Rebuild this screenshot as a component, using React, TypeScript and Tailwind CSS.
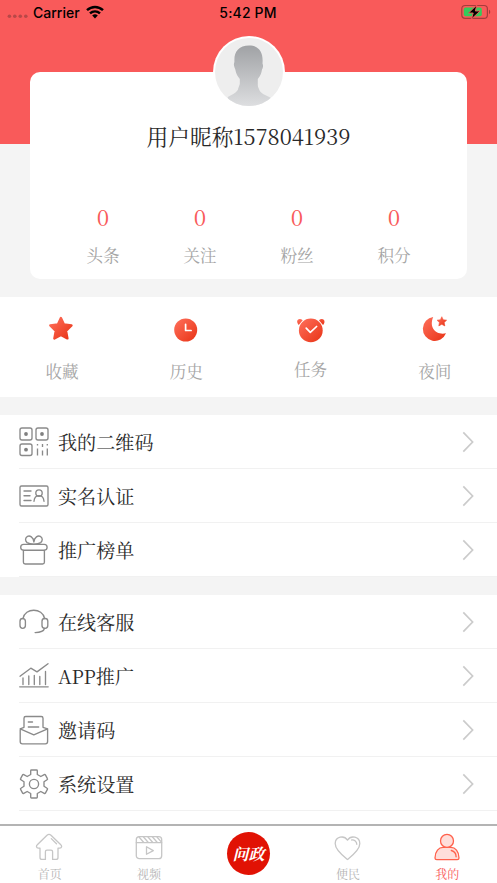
import type { ReactNode } from 'react';

const serif =
  "font-['Noto_Serif_CJK_SC','Source_Han_Serif_SC','Noto_Serif_SC','Liberation_Serif','Noto_Sans_CJK_SC',serif]";

function StatusBar() {
  return (
    <div className="grid h-6 grid-cols-3 items-center pl-[7px] pr-[6px] font-['Inter','Liberation_Sans',sans-serif] text-[14px] font-medium text-black">
      <div className="flex items-center">
        <svg width="22" height="24" viewBox="0 0 22 24" fill="#b84848">
          <circle cx="2.4" cy="16.3" r="1.8" />
          <circle cx="7.8" cy="16.3" r="1.8" />
          <circle cx="13.3" cy="16.3" r="1.8" />
          <circle cx="18.8" cy="16.3" r="1.8" />
        </svg>
        <span className="ml-[4px] w-[48px] whitespace-nowrap">Carrier</span>
        <svg className="ml-[5px]" width="18" height="14" viewBox="0 0 18 14" fill="none" stroke="#000" strokeWidth="2.5">
          <path d="M1 5.2C5.7.9 12.3.9 17 5.2" />
          <path d="M4 8.4c2.9-2.6 7.1-2.6 10 0" />
          <path d="M6.2 10.5a4 4 0 0 1 5.6 0L9 13.4z" fill="#000" stroke="none" />
        </svg>
      </div>
      <span className="-ml-[2px] text-center tracking-[0.15px]">5:42 PM</span>
      <svg className="justify-self-end" width="30" height="16" viewBox="0 0 30 16">
        <rect x="0.8" y="1.5" width="25.6" height="12.8" rx="3.4" fill="none" stroke="#a63c3c" strokeWidth="1.2" />
        <path d="M28 5.7c1.6.5 1.6 3.9 0 4.4z" fill="#a63c3c" />
        <rect x="2.8" y="3.6" width="18" height="8.6" rx="1.8" fill="#35cb5b" />
        <path d="M15.9.9 7.6 9h4.6l-1.7 6 8.5-8h-4.7z" fill="#000" stroke="#f95a5a" strokeWidth="0.9" />
      </svg>
    </div>
  );
}

function Avatar() {
  return (
    <svg className="-mt-9 shrink-0" width="72" height="72" viewBox="0 0 72 72">
      <defs>
        <linearGradient id="person" x1="0" y1="0" x2="0" y2="1">
          <stop offset="0" stopColor="#a0a2a5" />
          <stop offset="1" stopColor="#e0e1e3" />
        </linearGradient>
        <clipPath id="portrait">
          <circle cx="36" cy="36" r="34" />
        </clipPath>
      </defs>
      <circle cx="36" cy="36" r="36" fill="#fff" />
      <circle cx="36" cy="36" r="34" fill="#eee" />
      <path
        clipPath="url(#portrait)"
        fill="url(#person)"
        d="M36 9.500c-10 0-15 6-14.600 15.500.1 2-.8 2.500-.4 4.500.4 2 .8 2.700 1.300 4 .7 4.500 2.400 6.700 4.500 9.500v5c-.8 2.700-1.500 3.800-2 6-2.200 3.500-6.400 4.700-10 7V73h43V62c-4-2.500-9-3.800-11-7-.7-2.200-2-3.500-2-6v-6c3-3.500 3.600-6 4.200-9.500 1.100-1.600 1.400-4.300.5-6C50.500 16 46 9.500 36 9.500z"
      />
    </svg>
  );
}

const stats = ['头条', '关注', '粉丝', '积分'];

function Profile() {
  return (
    <header className="h-[297px] shrink-0 bg-[linear-gradient(#f95a5a_144px,#f4f4f4_144px)]">
      <StatusBar />
      <section className="mx-[30px] mt-12 flex h-[207px] flex-col items-center rounded-[10px] bg-white">
        <Avatar />
        <h1 className="mt-[13px] flex h-[30px] items-center text-[21.7px] leading-[30px] whitespace-nowrap text-[#292929]">
          用户昵称1578041939
        </h1>
        <dl className="mt-[51px] grid w-[388px] grid-cols-4 text-center">
          {stats.map((label) => (
            <div key={label} className="flex flex-col-reverse">
              <dt className="mt-[13px] text-[16.6px] leading-[24px] text-[#a5a5a5]">{label}</dt>
              <dd className="text-[22.5px] leading-[28px] text-[#f95a5a]">0</dd>
            </div>
          ))}
        </dl>
      </section>
    </header>
  );
}

function Quick({ label, raised, children }: { label: string; raised?: boolean; children: ReactNode }) {
  return (
    <button className="flex flex-col items-center pt-[16px]">
      <svg width="32" height="32" viewBox="0 0 32 32" fill="url(#ember)">
        {children}
      </svg>
      <span className={`${raised ? 'mt-[12px]' : 'mt-[14px]'} text-[16.6px] leading-[24px] text-[#a5a5a5]`}>{label}</span>
    </button>
  );
}

function QuickActions() {
  return (
    <section className="grid h-[100px] shrink-0 grid-cols-4 bg-white">
      <svg className="absolute" width="0" height="0">
        <defs>
          <linearGradient id="ember" x1="0" y1="0" x2="1" y2="1">
            <stop offset="0" stopColor="#ff705c" />
            <stop offset="1" stopColor="#e83315" />
          </linearGradient>
        </defs>
      </svg>
      <Quick label="收藏">
        <path
          d="M14.900 5 17.900 11.400l7.600 1-5.500 5.400 1.400 7.600-6.500-3.400-6.500 3.400 1.400-7.600-5.500-5.400 7.600-1z"
          stroke="url(#ember)"
          strokeWidth="2.4"
          strokeLinejoin="round"
        />
      </Quick>
      <Quick label="历史">
        <circle cx="15.700" cy="17" r="11.500" />
        <path d="M15.600 11.300v6.200h5.500" fill="none" stroke="#fff" strokeWidth="1.7" strokeLinecap="round" strokeLinejoin="round" />
      </Quick>
      <Quick label="任务" raised>
        <circle cx="15.800" cy="17.400" r="11.900" />
        <path d="M3.700 12C-.2 7.500 4 4.200 7.700 7.300M28 12C31.800 7.500 27.600 4.200 23.900 7.300" />
        <path d="m11.200 15.200 4.100 4.200 6.300-5.900" fill="none" stroke="#fff" strokeWidth="1.7" strokeLinecap="round" strokeLinejoin="round" />
      </Quick>
      <Quick label="夜间">
        <path d="M14.200 4A12 12 0 1 0 27 20.300C17.500 22.500 9.500 15 14.200 4z" />
        <path d="m22.800 3.700 1.400 3 3.400.5-2.400 2.300.6 3.400-3-1.600-3 1.600.6-3.400L18 7.200l3.400-.5z" stroke="url(#ember)" strokeWidth="0.600" strokeLinejoin="round" />
      </Quick>
    </section>
  );
}

const glyphs: Record<string, ReactNode> = {
  qr: (
    <>
      <rect x="1" y="1" width="12" height="12" rx="2" />
      <rect x="17" y="1" width="12" height="12" rx="2" />
      <rect x="1" y="17" width="12" height="11.500" rx="2" />
      <g fill="#808080" stroke="none">
        <circle cx="7" cy="7" r="1.900" />
        <circle cx="23" cy="7" r="1.900" />
        <circle cx="7" cy="22.700" r="1.900" />
      </g>
      <path d="M18.500 17v1.500m0 3v7M23.500 17v3m0 3.500v5M28.300 17v1.500m0 3v7" strokeLinecap="butt" />
    </>
  ),
  id: (
    <>
      <rect x="1" y="5" width="28" height="20" rx="1.500" />
      <path d="M5 10h7M5 14.700h6M5 19.500h7M15 20.300c.7-7.600 9.300-7.600 10 0" />
      <circle cx="20" cy="12" r="3.200" />
    </>
  ),
  gift: (
    <>
      <rect x="1.700" y="9.400" width="26.400" height="5.800" rx="2.900" />
      <path d="M4.400 15.300v11.900q0 1.800 1.800 1.800h17.400q1.800 0 1.800-1.800V15.300" />
      <path d="M14.900 7C14.300 2 10.800.3 8.500 1.400c-2.400 1.200-2.600 4.500-.4 6.200 1.400 1 4 1.500 6.800 1.500s5.400-.5 6.800-1.500c2.200-1.700 2-5-.4-6.200C19 .3 15.500 2 14.900 7z" />
    </>
  ),
  headset: (
    <>
      <rect x="1" y="11.500" width="5.400" height="9.800" rx="2.700" />
      <rect x="23" y="11.500" width="5.800" height="9.800" rx="2.700" />
      <path d="M4 11.500C6 .5 23.500.5 25.600 11.500M25.600 21.300c-.7 2.600-4 4.300-9.500 4.300" />
    </>
  ),
  chart: (
    <>
      <path d="M1 15.200 11.800 7.200l6.200 3.700 11-8.200M.7 25.800h28.500" />
      <path d="M4 17v6.500M9.800 15v8.500M15.300 14.500v9M20.800 15.500v8M26.500 10.500v13" />
    </>
  ),
  mail: (
    <path d="M5 12V3.300Q5 1.500 6.800 1.500h15.400Q24 1.500 24 3.300V12M9.300 7h4.200M9.300 12h10.400M5 12.300 1.200 13.800v12.800q0 2.200 2.200 2.200h23q2.200 0 2.200-2.200V13.800L24 12.300M1.200 13.800l13.600 6 13.800-6" />
  ),
  gear: (
    <>
      <path d="M11.700 1.800q0-.8.800-.8h5q.8 0 .8.800v3.700l3.500 2 3.400-1.900q.8-.4 1.200.3l2 3.700q.4.700-.3 1.100L25 12.800v4.400l3.100 2.100q.7.400.3 1.100l-2 3.700q-.4.700-1.200.3l-3.400-1.900-3.500 2v3.700q0 .8-.8.8h-5q-.8 0-.8-.8v-3.700l-3.500-2-3.400 1.900q-.8.4-1.200-.3l-2-3.700q-.4-.7.300-1.100L5 17.200v-4.400l-3.100-2.100q-.7-.4-.3-1.100l2-3.700q.4-.7 1.200-.3l3.400 1.900 3.500-2z" />
      <circle cx="15" cy="15" r="4.600" />
    </>
  ),
};

function Row({ icon, label }: { icon: string; label: string }) {
  return (
    <li className="flex h-[54px] items-center pl-[19px]">
      <div className="flex h-full flex-1 items-center border-b border-[#f1f1f1] pr-[23px]">
        <svg width="30" height="30" viewBox="0 0 30 30" fill="none" stroke="#8a8a8a" strokeWidth="1.350" strokeLinecap="round" strokeLinejoin="round">
          {glyphs[icon]}
        </svg>
        <span className="ml-[9px] flex-1 text-[19.1px] leading-[28px] text-[#292929]">{label}</span>
        <svg width="12" height="22" viewBox="0 0 12 22" fill="none" stroke="#cbcbcb" strokeWidth="1.700">
          <path d="m1.300 1.400 9.300 9.600-9.300 9.600" />
        </svg>
      </div>
    </li>
  );
}

function Tab({ label, active, children }: { label: string; active?: boolean; children: ReactNode }) {
  return (
    <button className={`flex flex-col items-center pt-[7px] ${active ? 'text-[#f95a5a]' : 'text-[#b5b5b5]'}`}>
      <svg width="30" height="30" viewBox="0 0 30 30" fill="none" stroke={active ? '#ff604b' : '#c6c6c6'} strokeWidth="1.300" strokeLinecap="round" strokeLinejoin="round">
        {children}
      </svg>
      <span className="mt-[2px] text-[12px] leading-[18px]">{label}</span>
    </button>
  );
}

function TabBar() {
  return (
    <nav className="grid h-[59px] shrink-0 grid-cols-5 border-t-2 border-[#b4b4b4] bg-white">
      <Tab label="首页">
        <path d="M5 15.200H3.200C1.300 15.200 1 13 2.300 11.800L12 2.200q2-1.700 4 0l9.800 9.600c1.300 1.200 1 3.400-.9 3.400H23v9.200q0 2-2 2h-3.400v-7.600q0-1.600-1.600-1.600h-4q-1.600 0-1.600 1.600v7.600H7q-2 0-2-2zM16.300 5.600l5.200 5.200" />
      </Tab>
      <Tab label="视频">
        <rect x="2.300" y="3.700" width="25.400" height="22" rx="3" />
        <path d="M2.300 9.700h25.400M5 4l4.800 5.500M9.500 4l4.800 5.500M14 4l4.800 5.500M18.500 4l4.800 5.500M23 4l4 4.600M12.500 13.800v7.500l6.800-3.700z" />
      </Tab>
      <button className="flex justify-center pt-[6px]">
        <span className="flex h-[43px] w-[43px] items-center justify-center rounded-full bg-[#e11204] font-['STXingkai','Noto_Serif_CJK_SC','Noto_Sans_CJK_SC',serif] text-[16px] font-bold text-white italic">
          问政
        </span>
      </button>
      <Tab label="便民">
        <path d="M14.500 26.500C10 22.900 2 16.700 2.200 10.500 2.400 3.500 11 1.900 14.500 7.100 18 1.900 26.600 3.500 26.800 10.500 27 16.700 19 22.900 14.500 26.500zM18.700 7c2.800-.3 5 1.500 5.100 4.300" />
      </Tab>
      <Tab label="我的" active>
        <g fill="#ffdeda">
          <path d="M3 25c0-7 4-10.600 8-10.600h8c4 0 8 3.600 8 10.600q0 1.600-1.800 1.600H4.800Q3 26.600 3 25z" />
          <circle cx="15" cy="7.900" r="6.500" />
        </g>
        <path d="M19.300 17.500c3.200.8 4.800 3 4.800 6.300" />
      </Tab>
    </nav>
  );
}

export default function App() {
  return (
    <main className={`flex h-[883px] w-full flex-col overflow-hidden bg-[#f4f4f4] ${serif}`}>
      <Profile />
      <QuickActions />
      <ul className="mt-[18px] h-[162px] shrink-0 bg-white">
        <Row icon="qr" label="我的二维码" />
        <Row icon="id" label="实名认证" />
        <Row icon="gift" label="推广榜单" />
      </ul>
      <ul className="mt-[18px] min-h-0 flex-1 bg-white">
        <Row icon="headset" label="在线客服" />
        <Row icon="chart" label="APP推广" />
        <Row icon="mail" label="邀请码" />
        <Row icon="gear" label="系统设置" />
      </ul>
      <TabBar />
    </main>
  );
}
